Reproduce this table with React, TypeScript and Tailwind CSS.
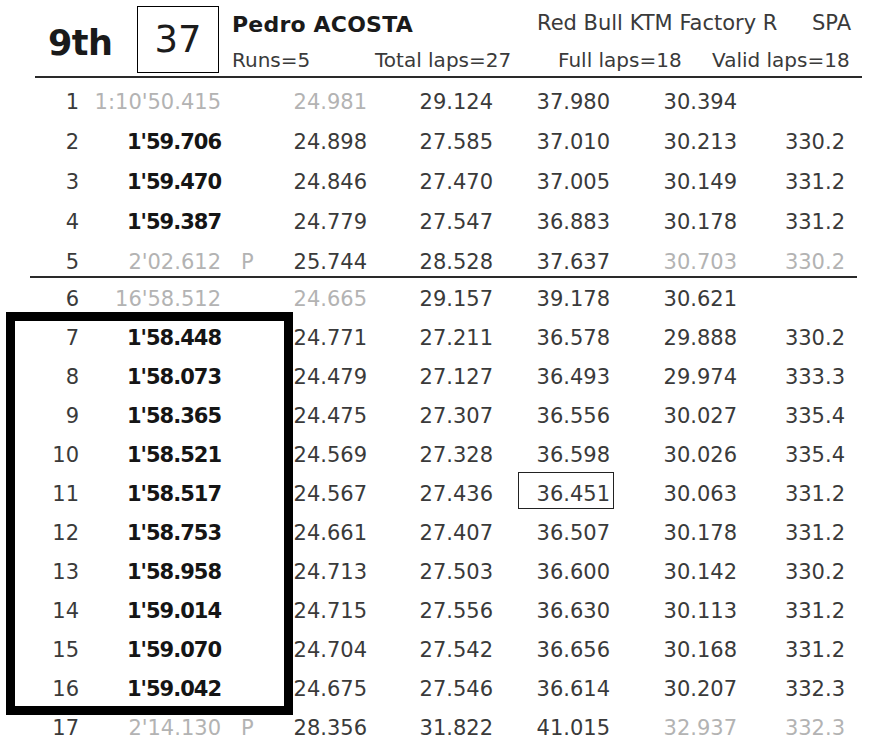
import React from "react";

type Row = {
  n: number;
  t: string;
  tg?: boolean;
  p?: boolean;
  s: string[];
  sg?: boolean[];
  v: string;
  vg?: boolean;
  boxed?: number;
};

const group1: Row[] = [
  { n: 1, t: "1:10'50.415", tg: true, s: ["24.981", "29.124", "37.980", "30.394"], sg: [true, false, false, false], v: "" },
  { n: 2, t: "1'59.706", s: ["24.898", "27.585", "37.010", "30.213"], v: "330.2" },
  { n: 3, t: "1'59.470", s: ["24.846", "27.470", "37.005", "30.149"], v: "331.2" },
  { n: 4, t: "1'59.387", s: ["24.779", "27.547", "36.883", "30.178"], v: "331.2" },
  { n: 5, t: "2'02.612", tg: true, p: true, s: ["25.744", "28.528", "37.637", "30.703"], sg: [false, false, false, true], v: "330.2", vg: true },
];

const group2: Row[] = [
  { n: 6, t: "16'58.512", tg: true, s: ["24.665", "29.157", "39.178", "30.621"], sg: [true, false, false, false], v: "" },
  { n: 7, t: "1'58.448", s: ["24.771", "27.211", "36.578", "29.888"], v: "330.2" },
  { n: 8, t: "1'58.073", s: ["24.479", "27.127", "36.493", "29.974"], v: "333.3" },
  { n: 9, t: "1'58.365", s: ["24.475", "27.307", "36.556", "30.027"], v: "335.4" },
  { n: 10, t: "1'58.521", s: ["24.569", "27.328", "36.598", "30.026"], v: "335.4" },
  { n: 11, t: "1'58.517", s: ["24.567", "27.436", "36.451", "30.063"], v: "331.2", boxed: 2 },
  { n: 12, t: "1'58.753", s: ["24.661", "27.407", "36.507", "30.178"], v: "331.2" },
  { n: 13, t: "1'58.958", s: ["24.713", "27.503", "36.600", "30.142"], v: "330.2" },
  { n: 14, t: "1'59.014", s: ["24.715", "27.556", "36.630", "30.113"], v: "331.2" },
  { n: 15, t: "1'59.070", s: ["24.704", "27.542", "36.656", "30.168"], v: "331.2" },
  { n: 16, t: "1'59.042", s: ["24.675", "27.546", "36.614", "30.207"], v: "332.3" },
  { n: 17, t: "2'14.130", tg: true, p: true, s: ["28.356", "31.822", "41.015", "32.937"], sg: [false, false, false, true], v: "332.3", vg: true },
];

const sWidths = ["w-[107px]", "w-[126px]", "w-[117px]", "w-[127px]"];

function LapRow({ r, h }: { r: Row; h: string }) {
  const dark = "text-[#3a3a3a]";
  const gray = "text-[#b3b3b3]";
  return (
    <div className={`flex items-start ${h} text-[21px] leading-[40px]`}>
      <div className={`w-[79px] text-right ${dark}`}>{r.n}</div>
      <div
        className={`w-[142px] text-right ${
          r.tg ? gray : "font-bold text-[#151515] tracking-[-1px]"
        }`}
      >
        {r.t}
      </div>
      <div className={`w-[39px] pl-[20px] ${gray}`}>{r.p ? "P" : ""}</div>
      {r.s.map((x, i) => (
        <div
          key={i}
          className={`relative ${sWidths[i]} text-right ${r.sg && r.sg[i] ? gray : dark}`}
        >
          {r.boxed === i && (
            <div className="absolute top-[-2px] h-[37px] left-[25px] right-[-4px] border-[1.5px] border-[#222]" />
          )}
          {x}
        </div>
      ))}
      <div className={`w-[108px] text-right ${r.vg ? gray : dark}`}>{r.v}</div>
    </div>
  );
}

export default function App() {
  return (
    <div
      className="relative w-[880px] h-[737px] overflow-hidden bg-white"
      style={{ fontFamily: '"DejaVu Sans", sans-serif' }}
    >
      {/* Header */}
      <div className="flex items-start pt-[6px] h-[70px]">
        <div className="ml-[48px] w-[89px] mt-[12px] text-[35px] leading-[50px] font-bold text-[#1a1a1a] tracking-[-0.5px]">
          9th
        </div>
        <div className="w-[82px] h-[67px] border-[1.5px] border-black flex items-center justify-center text-[37px] text-[#1c1c1c]">
          37
        </div>
        <div className="ml-[13px] flex flex-col">
          <div className="flex items-center h-[36px]">
            <div className="w-[305px] text-[22px] font-bold text-[#1a1a1a] tracking-[0.2px]">
              Pedro ACOSTA
            </div>
            <div className="w-[275px] text-[21px] text-[#3a3a3a]">Red Bull KTM Factory R</div>
            <div className="text-[21px] text-[#3a3a3a]">SPA</div>
          </div>
          <div className="flex items-center h-[36px] text-[20px] text-[#3a3a3a]">
            <div className="w-[143px]">Runs=5</div>
            <div className="w-[183px]">Total laps=27</div>
            <div className="w-[154px]">Full laps=18</div>
            <div>Valid laps=18</div>
          </div>
        </div>
      </div>
      <div className="ml-[35px] mt-[6px] w-[827px] h-[2px] bg-[#2a2a2a]" />

      {/* Group 1 */}
      <div className="mt-[4px]">
        {group1.map((r, i) => (
          <LapRow key={r.n} r={r} h={i === 4 ? "h-[34px]" : "h-[40px]"} />
        ))}
      </div>
      <div className="ml-[30px] w-[827px] h-[2px] bg-[#2a2a2a]" />

      {/* Group 2 */}
      <div className="mt-[1px]">
        {group2.map((r) => (
          <LapRow key={r.n} r={r} h="h-[39px]" />
        ))}
      </div>

      {/* Highlight frame */}
      <div className="absolute left-[6px] top-[312px] w-[287px] h-[403px] border-[9px] border-black" />
    </div>
  );
}
